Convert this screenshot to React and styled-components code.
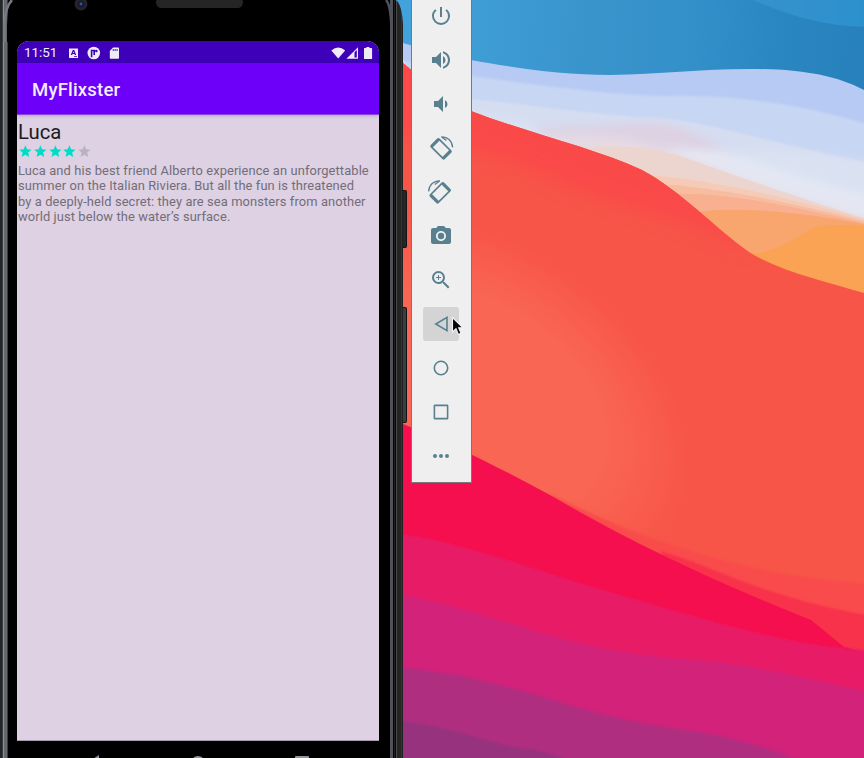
import React from "react";
import styled, { createGlobalStyle, css } from "styled-components";
import { MdPowerSettingsNew, MdVolumeUp, MdVolumeDown, MdPhotoCamera, MdZoomIn, MdStar } from "react-icons/md";

const GlobalStyle = createGlobalStyle`
  * { box-sizing: border-box; }
  body { margin: 0; overflow: hidden; font-family: Roboto, "Liberation Sans", sans-serif; }
`;

const Desktop = styled.main`
  position: relative;
  isolation: isolate;
  display: flex;
  align-items: flex-start;
  gap: 8px;
  width: 864px;
  height: 758px;
  overflow: hidden;
`;

const WallpaperSvg = styled.svg`
  position: absolute;
  inset: 0;
  z-index: -1;
  display: block;
`;

const Phone = styled.section`
  position: relative;
  width: 403px;
  height: 758px;
  padding: 0 24px 0 17px;
  display: flex;
  flex-direction: column;
  border-top-right-radius: 8px 28px;
  background: linear-gradient(to right,
    #252629 0 2px, #3b3c40 2px 3px, #8c8e96 3px 4px, #666870 4px 7px, #3a3b3f 7px 8px, #000 8px 390px,
    #515259 390px 393px, #050505 393px 394px, #222 394px 395px, #050505 395px 396px,
    #4a4b4e 396px 397px, #252525 397px 401px, #343434 401px 402px, #202020 402px);
`;

const BezelSvg = styled.svg`
  position: absolute;
  left: 0;
  top: 0;
`;

const SideKey = styled.span`
  position: absolute;
  left: 403px;
  top: ${(p) => p.$top}px;
  width: 4px;
  height: ${(p) => p.$height}px;
  border: 1px solid #141414;
  border-left: 0;
  border-radius: 0 2px 2px 0;
  background: ${(p) => p.$color};
`;

const Forehead = styled.div`
  flex: 0 0 41px;
`;

const Screen = styled.div`
  position: relative;
  flex: 0 0 700px;
  display: flex;
  flex-direction: column;
  border-radius: 12px 12px 0 0;
  overflow: hidden;
  background: #ddd1e3;
  border-bottom: 1px solid #a79dae;
`;

const StatusBar = styled.div`
  height: 22px;
  flex: none;
  display: flex;
  align-items: center;
  justify-content: space-between;
  padding: 1px 6px 0 7px;
  background: #3e00b8;
  color: #f1eef8;
`;

const StatusGroup = styled.div`
  display: flex;
  align-items: center;
`;

const Clock = styled.span`
  width: 44px;
  font-size: 13.4px;
  line-height: 22px;
  letter-spacing: 0;
`;

const StatusSvg = styled.svg`
  display: block;
`;

const AppBar = styled.header`
  height: 52px;
  flex: none;
  padding: 2px 15px 0;
  display: flex;
  align-items: center;
  background: #6c00f8;
  border-bottom: 1px solid #8b45e2;
  box-shadow: 0 1px 3px rgba(60, 40, 80, 0.25);
  color: #f4ecff;
  font-size: 18.5px;
  font-weight: 500;
  letter-spacing: 0.2px;
`;

const Movie = styled.article`
  padding: 5px 1px 0;
  display: flex;
  flex-direction: column;
`;

const Title = styled.h1`
  margin: 0;
  font-size: 20.3px;
  line-height: 24px;
  font-weight: 400;
  color: #1c1a1d;
`;

const Rating = styled.div`
  display: flex;
  height: 15px;
`;

const Star = styled(MdStar)`
  width: 14.8px;
  height: 14.8px;
  flex: none;
  color: ${(p) => (p.$on ? "#00dcc8" : "#b9b0c1")};
`;

const Overview = styled.p`
  margin: 4px 0 0;
  font-size: 12.9px;
  line-height: 15.4px;
  letter-spacing: 0.1px;
  color: #736d77;
  white-space: nowrap;
`;

const NavBar = styled.nav`
  height: 17px;
  overflow: hidden;
  flex: none;
`;

const Toolbar = styled.aside`
  width: 61px;
  height: 483px;
  padding-right: 1px;
  display: flex;
  flex-direction: column;
  align-items: center;
  gap: 10px;
  border: 1px solid #77797a;
  border-top: 0;
  background: #efefef;
`;

const ToolButton = styled.button`
  flex: none;
  width: 36px;
  height: 34px;
  padding: 0;
  border: 0;
  border-radius: 3px;
  display: flex;
  align-items: center;
  justify-content: center;
  background: ${(p) => (p.$active ? "#d3d4d3" : "transparent")};
  color: #59808f;
  ${(p) => p.$first && css`margin-top: -1px;`}
  svg { display: block; width: 24px; height: 24px; overflow: visible; }
`;

const Pointer = styled.svg`
  position: absolute;
  left: 450px;
  top: 315px;
`;

function Wallpaper() {
  return (
    <WallpaperSvg width="864" height="758" viewBox="0 0 864 758" aria-hidden="true">
      <defs>
        <linearGradient id="sky" gradientUnits="userSpaceOnUse" x1="403" y1="50" x2="864" y2="80">
          <stop offset="0" stopColor="#42a2db" />
          <stop offset=".4" stopColor="#3a94cc" />
          <stop offset=".62" stopColor="#3490c9" />
          <stop offset=".8" stopColor="#2b87c1" />
          <stop offset="1" stopColor="#2780bb" />
        </linearGradient>
        <linearGradient id="skyTop" x1="0" x2="1">
          <stop offset="0" stopColor="#3991ca" />
          <stop offset="1" stopColor="#2b91ce" />
        </linearGradient>
        <radialGradient id="glow" gradientUnits="userSpaceOnUse" cx="0" cy="0" r="1" gradientTransform="translate(480 400) rotate(35) scale(230 155)">
          <stop offset="0" stopColor="#f96653" />
          <stop offset=".6" stopColor="#f96653" />
          <stop offset="1" stopColor="#f96653" stopOpacity="0" />
        </radialGradient>
        <clipPath id="coralShape">
          <path d="M403 63C431 86 448 102 471 111C531 134 594 148 642 170C680 190 715 228 749 252C779 271 827 282 864 293V660H403Z" />
        </clipPath>
        <filter id="soft" x="-5%" y="-5%" width="110%" height="110%"><feGaussianBlur stdDeviation="1.3" /></filter>
        <filter id="softer" x="-10%" y="-20%" width="120%" height="140%"><feGaussianBlur stdDeviation="4" /></filter>
        <filter id="softest" x="-10%" y="-20%" width="120%" height="140%"><feGaussianBlur stdDeviation="9" /></filter>
      </defs>
      <rect width="864" height="758" fill="url(#sky)" />
      <path d="M753 0C790 16 825 26 864 27V0Z" fill="url(#skyTop)" />
      <path d="M403 43Q436 53 471 60C510 67 560 75 610 75C660 74 700 69 750 69C800 69 835 75 864 90V320H403Z" fill="#b7caf3" />
      <g filter="url(#soft)">
        <path d="M395 57Q440 73 471 76C530 84 610 95 665 96C735 94 800 104 870 125V320H395Z" fill="#c7d6f3" />
        <path d="M395 95L471 99C535 105 600 116 660 118C710 122 780 145 870 163V320H395Z" fill="#d5ddf1" />
      </g>
      <g filter="url(#softer)">
        <path d="M471 112L530 124L560 140L720 155L760 150C790 151 820 155 874 165V320H471Z" fill="#dae2f2" />
        <path d="M532 130C560 124 590 127 620 124C650 120 680 124 700 136L726 148L700 152L570 145Z" fill="#ddd1e3" />
        <path d="M545 137C590 133 620 136 665 148C700 149 725 149 750 160C800 177 830 188 870 195V250H600Z" fill="#e4e7f3" />
        <path d="M545 138C590 134 625 136 665 148C720 174 790 195 870 220V250H600Z" fill="#e5dae2" />
      </g>
      <path d="M582 148C620 144 650 147 680 156C730 174 800 198 864 218V300H680Z" fill="#edd5cf" />
      <path d="M648 175C700 178 780 195 864 219V300H680Z" fill="#f5cbb7" />
      <path d="M655 184C710 186 790 202 864 221V300H690Z" fill="#f6bda0" />
      <path d="M671 194C720 192 790 205 864 223V300H700Z" fill="#f8b090" />
      <path d="M695 213C720 207 785 209 864 224V310H740Z" fill="#f8a66d" />
      <path d="M750 254C780 252 796 236 816 227C830 224 846 225 864 226V310H780Z" fill="#faa354" />
      <g clipPath="url(#coralShape)">
        <rect x="403" y="60" width="461" height="600" fill="#f75548" />
        <path d="M390 40V133C450 143 515 160 570 187C630 212 690 218 749 252L700 150L500 60Z" fill="#fa4949" filter="url(#softest)" />
        <path d="M403 145L471 160L700 340L720 620H403Z" fill="url(#glow)" />
      </g>
      <g filter="url(#soft)">
        <path d="M550 494C640 538 675 547 730 562C780 576 820 578 874 585V670H700Z" fill="#f94b4b" />
        <path d="M660 551C710 564 760 597 874 616V670H720Z" fill="#f8314b" />
      </g>
      <path d="M403 424C450 443 500 468 550 495C625 539 710 580 811 620Q827 633 844 647L864 652V758H403Z" fill="#f60f4e" />
      <g filter="url(#soft)">
        <path d="M393 533C450 540 500 558 560 577C640 601 720 625 780 638C810 645 840 648 874 651V768H393Z" fill="#e81a66" />
        <path d="M393 593C435 600 475 613 520 626C590 649 650 658 710 661C770 668 820 682 874 693V768H393Z" fill="#d2247a" />
        <path d="M393 667C455 671 510 687 560 702C615 720 665 727 710 734C745 741 780 751 815 768H393Z" fill="#b02d80" />
        <path d="M393 720C455 726 485 743 520 748C545 750 565 757 575 768H393Z" fill="#96327e" />
      </g>
    </WallpaperSvg>
  );
}

function StatusNotifications() {
  return (
    <StatusSvg width="54" height="14" viewBox="68 45 54 14" fill="#eeeaf6">
      <path fillRule="evenodd" d="M69 47.5h9v9.6h-9ZM72.8 49L70.8 54h1.3l.4-1h2l.4 1h1.3L74.2 49Zm.2 3 .6-1.6.6 1.6ZM74 55h3v.8h-3Z" />
      <circle cx="93.8" cy="52" r="6.3" />
      <path d="M91.6 56.2V49.5h2.6V54" fill="none" stroke="#3e00b8" strokeWidth="1.6" />
      <circle cx="96.3" cy="50" r="1.3" fill="#3e00b8" />
      <path fillRule="evenodd" d="M113 46.4h5.2q.8 0 .8.8V57q0 .8-.8.8h-7.6q-.8 0-.8-.8v-7.1ZM112.8 48v2h.9v-2Zm1.9 0v2h.9v-2Zm1.9 0v2h.9v-2Z" />
    </StatusSvg>
  );
}

function StatusSignals() {
  return (
    <StatusSvg width="42" height="14" viewBox="331 45 42 14" fill="#eeeaf6">
      <path d="M331.3 49.5Q338.2 43.4 345.2 49.5L338.2 57.6Z" />
      <path fillRule="evenodd" d="M358 46.2V57.8H346.4ZM356.8 49L354.5 51.3V56.6h2.3Z" />
      <path d="M366.4 46h3v1.1h2.1q.6 0 .6.6v9.7q0 .6-.6.6h-6.9q-.6 0-.6-.6v-9.7q0-.6.6-.6h1.8Z" />
    </StatusSvg>
  );
}

function RotateIcon({ mirrored }) {
  return (
    <svg viewBox="0 0 24 24" fill="none" stroke="currentColor">
      <g transform={mirrored ? "translate(23.2 0) scale(-1 1)" : undefined}>
        <g transform="translate(12 12.8) rotate(45)">
          <rect x="-10" y="-6.3" width="20" height="12.6" rx="1.8" fill="currentColor" stroke="none" />
          <rect x="-6.8" y="-4.6" width="13.6" height="9.2" fill="#efefef" stroke="none" />
        </g>
        <path d="M12.2 .9C18.5 .4 23.2 5 23.6 11.4M12.6 1L17.4 4.6" strokeWidth="1.3" />
      </g>
    </svg>
  );
}

const BackIcon = () => <svg viewBox="0 0 24 24" fill="none" stroke="currentColor" strokeWidth="1.6"><path d="M18 5.3V18.7L6.8 12Z" /></svg>;
const HomeIcon = () => <svg viewBox="0 0 24 24" fill="none" stroke="currentColor" strokeWidth="1.6"><circle cx="12" cy="12" r="6.7" /></svg>;
const RecentsIcon = () => <svg viewBox="0 0 24 24" fill="none" stroke="currentColor" strokeWidth="1.6"><rect x="5.4" y="5.4" width="13.2" height="13.2" rx=".4" /></svg>;
const MoreIcon = () => <svg viewBox="0 0 24 24" fill="currentColor"><circle cx="6" cy="12" r="2" /><circle cx="12" cy="12" r="2" /><circle cx="18" cy="12" r="2" /></svg>;

const tools = [
  { name: "Power", icon: <MdPowerSettingsNew /> },
  { name: "Volume up", icon: <MdVolumeUp /> },
  { name: "Volume down", icon: <MdVolumeDown /> },
  { name: "Rotate left", icon: <RotateIcon /> },
  { name: "Rotate right", icon: <RotateIcon mirrored /> },
  { name: "Take screenshot", icon: <MdPhotoCamera /> },
  { name: "Zoom", icon: <MdZoomIn /> },
  { name: "Back", icon: <BackIcon />, active: true },
  { name: "Home", icon: <HomeIcon /> },
  { name: "Overview", icon: <RecentsIcon /> },
  { name: "More", icon: <MoreIcon /> },
];

function Emulator() {
  return (
    <Phone>
      <BezelSvg width="403" height="42" viewBox="0 0 403 42" aria-hidden="true">
        <path d="M7 42V25Q8 6 14 0H386Q390 10 390 42Z" fill="#000" />
        <path d="M4.5 42V25Q5 7 12 0" fill="none" stroke="#777981" strokeWidth="2.5" />
        <path d="M386 0Q392 6 391.5 42" fill="none" stroke="#515259" strokeWidth="2.5" />
        <circle cx="81" cy="4" r="6.5" fill="#24242a" />
        <circle cx="81" cy="4" r="3.5" fill="#151b35" />
        <circle cx="81" cy="4" r="1.4" fill="#37548b" />
        <rect x="156" y="-3" width="87" height="11" rx="5.5" fill="#252525" />
      </BezelSvg>
      <SideKey $top={190} $height={58} $color="#262626" />
      <SideKey $top={307} $height={116} $color="#3b3d40" />
      <Forehead />
      <Screen>
        <StatusBar>
          <StatusGroup><Clock>11:51</Clock><StatusNotifications /></StatusGroup>
          <StatusSignals />
        </StatusBar>
        <AppBar>MyFlixster</AppBar>
        <Movie>
          <Title>Luca</Title>
          <Rating>{[1, 2, 3, 4, 5].map((n) => <Star key={n} $on={n <= 4} />)}</Rating>
          <Overview>
            Luca and his best friend Alberto experience an unforgettable<br />
            summer on the Italian Riviera. But all the fun is threatened<br />
            by a deeply-held secret: they are sea monsters from another<br />
            world just below the water’s surface.
          </Overview>
        </Movie>
      </Screen>
      <NavBar>
        <svg width="362" height="17" viewBox="17 741 362 17" fill="#96949a">
          <path d="M99 755V768L88 762Z" />
          <circle cx="198" cy="763" r="7" />
          <rect x="295" y="756" width="14" height="14" rx="1" />
        </svg>
      </NavBar>
    </Phone>
  );
}

export default function App() {
  return (
    <>
      <GlobalStyle />
      <Desktop>
        <Wallpaper />
        <Emulator />
        <Toolbar>
          {tools.map((t, i) => (
            <ToolButton key={t.name} aria-label={t.name} $active={t.active} $first={i === 0}>{t.icon}</ToolButton>
          ))}
        </Toolbar>
        <Pointer width="16" height="22" viewBox="0 0 16 22" aria-hidden="true">
          <path d="M2.5 2.5V17L6 13.8L8.4 19.4L11 18.2L8.7 12.8H13Z" fill="#050505" stroke="#f5f2f7" strokeWidth="1.1" />
        </Pointer>
      </Desktop>
    </>
  );
}
